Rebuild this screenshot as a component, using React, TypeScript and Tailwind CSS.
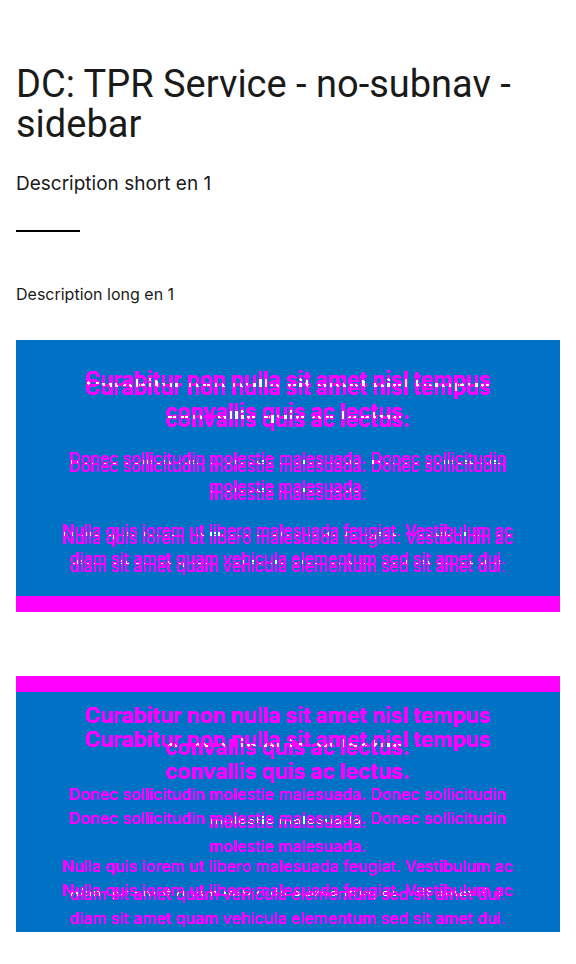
type CopyProps = { className: string; duplicate?: boolean };

function PromoCopy({ className, duplicate }: CopyProps) {
  return (
    <div
      aria-hidden={duplicate}
      className={`col-start-1 row-start-1 text-center text-[#ff00ff] opacity-50 ${className}`}
    >
      <h2 className="text-[21px] leading-8 font-bold">
        Curabitur non nulla sit amet nisl tempus
        <br />
        convallis quis ac lectus.
      </h2>
      <p className="mt-4 text-base leading-7 font-medium">
        Donec sollicitudin molestie malesuada. Donec sollicitudin
        <br />
        molestie malesuada.
      </p>
      <p className="mt-4 text-base leading-7 font-medium">
        Nulla quis lorem ut libero malesuada feugiat. Vestibulum ac
        <br />
        diam sit amet quam vehicula elementum sed sit amet dui.
      </p>
    </div>
  );
}

// Single coverage becomes solid magenta, double coverage becomes white.
function OverlapFilter() {
  return (
    <svg width="0" height="0" className="absolute" aria-hidden="true">
      <filter id="overlap" colorInterpolationFilters="sRGB">
        <feColorMatrix values="0 0 0 0 1  0 0 0 1 0  0 0 0 0 1  0 0 0 1 0" />
        <feComponentTransfer>
          <feFuncG type="discrete" tableValues="0 0 1" />
          <feFuncA type="discrete" tableValues="0 1 1 1 1 1 1 1 1 1" />
        </feComponentTransfer>
      </filter>
    </svg>
  );
}

export default function App() {
  return (
    <main className="min-h-screen bg-white px-4 pt-16 pb-8 font-[Inter,sans-serif] text-[#1a1a1a]">
      <OverlapFilter />
      <h1 className="font-[Roboto,sans-serif] text-[38px] leading-10">
        DC: TPR Service - no-subnav - sidebar
      </h1>
      <p className="mt-6 text-[19px] leading-8">Description short en 1</p>
      <hr className="mt-[30px] w-16 border-t-2 border-black" />
      <p className="mt-12 text-base leading-7">Description long en 1</p>
      <section className="mt-8 border-b-16 border-[#ff00ff] bg-[#0072c6]">
        <div className="grid pb-4 [filter:url(#overlap)]">
          <PromoCopy className="pt-6" />
          <PromoCopy className="pt-8" duplicate />
        </div>
      </section>
      <section className="mt-16 border-t-16 border-[#ff00ff] bg-[#0072c6]">
        <div className="grid [filter:url(#overlap)]">
          <PromoCopy className="pt-2" />
          <PromoCopy className="pt-8" duplicate />
        </div>
      </section>
    </main>
  );
}
